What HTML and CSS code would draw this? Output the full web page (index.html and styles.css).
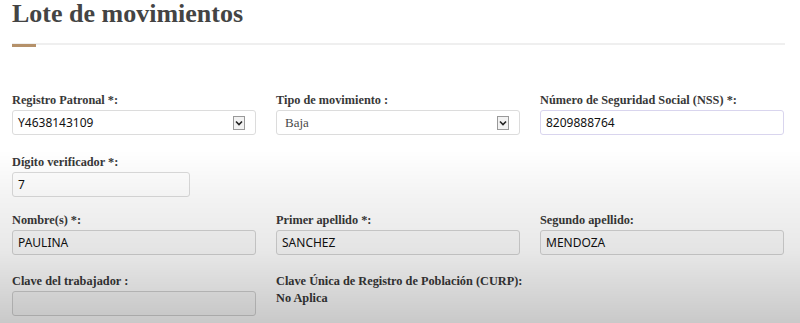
FILE: index.html
```html
<!DOCTYPE html>
<html lang="es">
<head>
<meta charset="utf-8">
<title>Lote de movimientos</title>
<link rel="stylesheet" href="styles.css">
</head>
<body>
<div class="page">
  <h1 class="title">Lote de movimientos</h1>
  <div class="rule"><span class="rule-accent"></span></div>

  <div class="row row-1">
    <div class="field">
      <label class="label">Registro Patronal *:</label>
      <div class="box select"><span class="val sans">Y4638143109</span><span class="arrow"><svg width="8" height="6" viewBox="0 0 8 6"><path d="M1 1.5 L4 4.5 L7 1.5" fill="none" stroke="#222" stroke-width="1.6"/></svg></span></div>
    </div>
    <div class="field">
      <label class="label">Tipo de movimiento :</label>
      <div class="box select"><span class="val serif">Baja</span><span class="arrow"><svg width="8" height="6" viewBox="0 0 8 6"><path d="M1 1.5 L4 4.5 L7 1.5" fill="none" stroke="#222" stroke-width="1.6"/></svg></span></div>
    </div>
    <div class="field">
      <label class="label">Número de Seguridad Social (NSS) *:</label>
      <div class="box focus"><span class="val sans">8209888764</span></div>
    </div>
  </div>

  <div class="row row-2">
    <div class="field">
      <label class="label">Dígito verificador *:</label>
      <div class="box short"><span class="val sans">7</span></div>
    </div>
  </div>

  <div class="row row-3">
    <div class="field">
      <label class="label">Nombre(s) *:</label>
      <div class="box disabled"><span class="val sans">PAULINA</span></div>
    </div>
    <div class="field">
      <label class="label">Primer apellido *:</label>
      <div class="box disabled"><span class="val sans">SANCHEZ</span></div>
    </div>
    <div class="field">
      <label class="label">Segundo apellido:</label>
      <div class="box disabled"><span class="val sans">MENDOZA</span></div>
    </div>
  </div>

  <div class="row row-4">
    <div class="field">
      <label class="label">Clave del trabajador :</label>
      <div class="box disabled"><span class="val sans"></span></div>
    </div>
    <div class="field">
      <label class="label nowrap">Clave Única de Registro de Población (CURP):</label>
      <div class="static">No Aplica</div>
    </div>
  </div>
</div>
<div class="shade"></div>
</body>
</html>
```
FILE: styles.css
```css
html, body {
  margin: 0;
  padding: 0;
  background: #fff;
  height: 100%;
  overflow: hidden;
}
.page {
  padding: 0 16px 0 12px;
  font-family: "Liberation Serif", "Times New Roman", serif;
}
.title {
  margin: 0;
  font-size: 26px;
  line-height: 28px;
  font-weight: bold;
  color: #444;
}
.rule {
  margin-top: 15px;
  height: 2px;
  background: #efefef;
  width: 773px;
  position: relative;
}
.rule-accent {
  position: absolute;
  left: 0;
  top: 1px;
  width: 24px;
  height: 3px;
  background: #b5916a;
}
.row {
  display: grid;
  grid-template-columns: 244px 244px 244px;
  column-gap: 20px;
}
.row-1 { margin-top: 47px; }
.row-2 { margin-top: 19px; }
.row-3 { margin-top: 15px; }
.row-4 { margin-top: 18px; }
.label {
  display: block;
  font-size: 12.3px;
  line-height: 16px;
  font-weight: bold;
  color: #383838;
  margin-bottom: 2px;
}
.nowrap { white-space: nowrap; margin-bottom: 1px; }
.box {
  box-sizing: border-box;
  height: 25px;
  border: 1px solid #dcdcdc;
  border-radius: 3px;
  background: #fff;
  display: flex;
  align-items: center;
  padding: 0 6px 0 5px;
}
.box.short { width: 178px; }
.box.focus { border-color: #d9d5ee; }
.box.disabled { background: #fbfbfb; border-color: #d4d4d4; }
.select { justify-content: space-between; padding-right: 10px; }
.val {
  font-size: 12px;
  color: #111;
}
.sans { font-family: "Noto Sans", "Open Sans", sans-serif; }
.serif { font-family: "Liberation Serif", serif; color: #4a4a4a; font-size: 13px; padding-left: 3px; }
.arrow {
  box-sizing: border-box;
  width: 12px;
  height: 14px;
  border: 1px solid #999;
  background: #f2f2f2;
  display: flex;
  align-items: center;
  justify-content: center;
}
.static {
  font-size: 12.3px;
  line-height: 16px;
  font-weight: bold;
  color: #383838;
}
.shade {
  position: fixed;
  left: 0;
  top: 0;
  width: 100%;
  height: 100%;
  pointer-events: none;
  background: linear-gradient(to bottom, rgba(0,0,0,0) 0px, rgba(0,0,0,0) 150px, rgba(0,0,0,0.05) 200px, rgba(0,0,0,0.09) 250px, rgba(0,0,0,0.21) 323px);
}
```
